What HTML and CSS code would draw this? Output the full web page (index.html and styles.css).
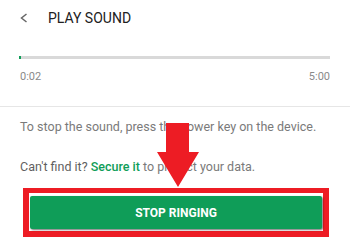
FILE: index.html
```html
<!DOCTYPE html>
<html>
<head>
	<title>Play Sound</title>

	<link rel="stylesheet" href="styles.css">
</head>
<body>
	<div class="header">
		<svg class="back" width="8" height="10" viewBox="0 0 8 10">
			<polyline points="6.5,1 1.5,5 6.5,9" />
		</svg>
		<span class="title">PLAY SOUND</span>
	</div>

	<div class="progress">
		<div class="track"><div class="fill" style="width: 0.7%"></div></div>
		<div class="times">
			<span>0:02</span>
			<span>5:00</span>
		</div>
	</div>

	<div class="content">
		<p class="hint">To stop the sound, press the power key on the device.</p>
		<p class="hint"><span class="ask">Can't find it?</span> <a class="secure">Secure it</a> to protect your data.</p>

		<div class="highlight">
			<button class="stop">STOP RINGING</button>
		</div>
	</div>

	<svg class="arrow" width="44" height="66" viewBox="0 0 44 66">
		<polygon points="9,0 32,0 32,29 42,29 21,64 0,29 9,29" />
	</svg>
</body>
</html>
```

FILE: styles.css
```css
body {
	margin: 0;
	font-family: Roboto, "Liberation Sans", sans-serif;
	background: #fff;
	position: relative;
	width: 350px;
	height: 250px;
	overflow: hidden;
}
.header {
	display: flex;
	align-items: center;
	padding: 8px 20px 0;
	height: 20px;
}
.back {
	fill: none;
	stroke: #666;
	stroke-width: 1.5;
	margin-right: 20px;
}
.title {
	font-size: 14px;
	line-height: 20px;
	color: #212121;
}
.progress {
	padding: 28px 20px 0 19px;
}
.track {
	height: 3px;
	background: #d9d9d9;
}
.fill {
	height: 3px;
	background: #0f9d58;
}
.times {
	display: flex;
	justify-content: space-between;
	margin-top: 10px;
	font-size: 11px;
	line-height: 16px;
	color: #8a8a8a;
	padding-left: 1px;
}
.content {
	margin-top: 21px;
	border-top: 1px solid #e6e6e6;
	padding-top: 10px;
}
.hint {
	margin: 0 20px 20px;
	font-size: 12.5px;
	line-height: 20px;
	color: #7a7a7a;
}
.ask {
	color: #5f5f5f;
}
.secure {
	color: #0f9d58;
	font-weight: 500;
}
.highlight {
	margin: -9px 21px 0 23px;
	border: 6px solid #ed1c24;
	border-top-width: 5px;
	padding: 3px 1px 2px 1px;
}
.stop {
	display: block;
	width: 292px;
	height: 33px;
	border: none;
	border-radius: 2px;
	background: #0f9d58;
	color: #fff;
	font-family: Roboto, "Liberation Sans", sans-serif;
	font-size: 12px;
	font-weight: 700;
	box-shadow: 1px 1px 2px rgba(0, 0, 0, 0.55);
}
.arrow {
	position: absolute;
	left: 157px;
	top: 123px;
	fill: #ed1c24;
}
```
